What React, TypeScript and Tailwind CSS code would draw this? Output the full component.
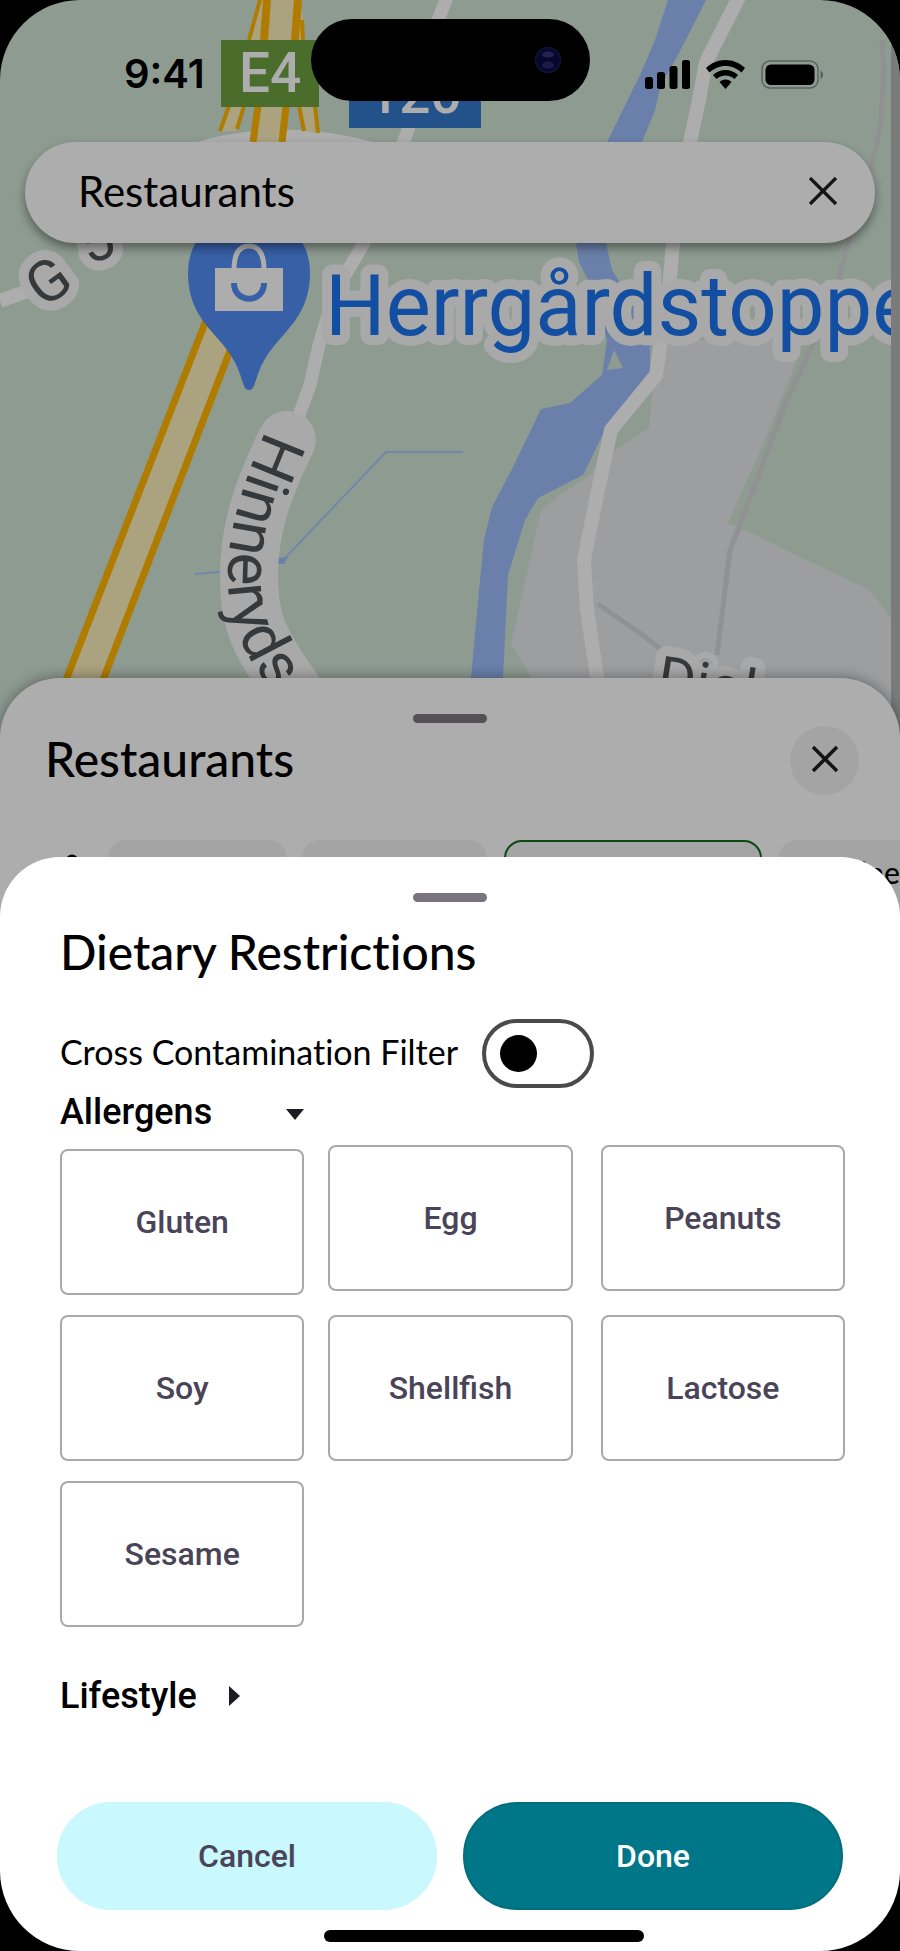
import { useState } from 'react';
import { X } from 'lucide-react';

const allergenColumns = [
  { items: ['Gluten', 'Soy', 'Sesame'], className: 'mt-1 gap-5' },
  { items: ['Egg', 'Shellfish'], className: 'ml-6 gap-6' },
  { items: ['Peanuts', 'Lactose'], className: 'ml-7 gap-6' },
];

function MapBackground() {
  return (
    <svg
      viewBox="0 0 900 860"
      preserveAspectRatio="xMidYMin slice"
      className="absolute inset-x-0 top-0 w-full"
      fontFamily="Roboto, sans-serif"
      aria-hidden="true"
    >
      <rect width="900" height="860" fill="#8d9b91" />

      {/* Built-up area */}
      <path
        d="M668 340H805L795 365L765 440L728 523L745 530L800 557L870 590L891 618V860H532V678L511 645L521 600L530 560L541 510L560 495L590 475L600 460L620 447L649 428L652 395Z"
        fill="#9d9ea0"
      />

      {/* River */}
      <path
        d="M668 0H706L678 55L661 85L655 110L642 142L606 200V243L612 270L650 330V375L605 430L583 475L538 498L525 520L508 575L503 678V700H470L471 678L480 580L484 540L492 507L513 467L541 409L570 403L602 375L607 340L588 280L579 262L576 243V200L607 142L640 75L655 40Z"
        fill="#6a80aa"
      />
      <path d="M614 350L623 368L607 370Z" fill="#8d9b91" />
      <path d="M195 574L230 571M275 561L285 558L386 452H463" fill="none" stroke="#7387a6" strokeWidth="2" />
      <path d="M270 559L288 557L284 564H272Z" fill="#6a80aa" />

      {/* Small roads */}
      <path
        d="M882 40L884 70L880 130L868 180L846 250L838 285L810 350L785 405L738 530L730 550L717 655"
        fill="none"
        stroke="#909193"
        strokeWidth="5"
      />
      <path d="M598 604L640 633L662 650" fill="none" stroke="#909193" strokeWidth="5" />
      <path
        d="M740 -5L706 62L699 100L690 142L673 243L668 300L661 340L656 375L611 430L598 490L584 560L587 610L599 690"
        fill="none"
        stroke="#adadad"
        strokeWidth="14"
      />
      <path
        d="M450 -10L430 40L408 130L364 243L335 292L319 345L310 385L290 440"
        fill="none"
        stroke="#adadad"
        strokeWidth="13"
      />
      <path d="M0 301L25 292L45 280" fill="none" stroke="#adadad" strokeWidth="14" />
      <path d="M190 144Q280 115 380 144Z" fill="#adadad" />

      {/* E4 motorway */}
      <path d="M262 0L250 40H304L301 0Z" fill="#aba27f" />
      <path d="M260 0L249 40M302 20L303 40" fill="none" stroke="#b07c00" strokeWidth="4" />
      <path d="M267 0L264 40M298 0L295 40" fill="none" stroke="#b07c00" strokeWidth="8" />
      <path d="M229 106L220 131H237L244 106ZM299 106L304 131L318 133L315 106ZM258 106L252 142H282L286 106Z" fill="#aba27f" />
      <path d="M229 106L220 131M244 106L237 129M299 106L304 131M315 106L318 133" fill="none" stroke="#b07c00" strokeWidth="4" />
      <path d="M258 106L253 142M286 106L282 142" fill="none" stroke="#b07c00" strokeWidth="7" />
      <path d="M210 310L66 680H104L238 330Z" fill="#aba27f" />
      <path d="M210 310L66 680M238 330L103 680" fill="none" stroke="#b07c00" strokeWidth="7" />

      {/* Road signs */}
      <rect x="221" y="40" width="98" height="67" fill="#4a6d2c" />
      <text x="239" y="92" fontSize="55" fontWeight="500" fill="#adadad">E4</text>
      <rect x="349" y="70" width="132" height="58" fill="#23528a" />
      <text x="368" y="113" fontSize="55" fontWeight="500" fill="#adadad">120</text>

      {/* Shop pin */}
      <path
        d="M249 390C245 390 244 386 242 380C236 360 228 350 212 332C197 315 188 298 188 272A61 61 0 0 1 310 272C310 298 301 315 286 332C270 350 262 360 256 380C254 386 253 390 249 390Z"
        fill="#3860a7"
      />
      <rect x="215" y="268" width="68" height="43" fill="#adadad" />
      <path d="M234 270C234 252 240 246 249 246S264 252 264 270" fill="none" stroke="#adadad" strokeWidth="5" />
      <path d="M234 283C234 304 264 304 264 283" fill="none" stroke="#3860a7" strokeWidth="6" />

      {/* Labels */}
      <g stroke="#a9a9a9" strokeWidth="20" strokeLinejoin="round" paintOrder="stroke">
        <text x="325" y="335" fontSize="85" fill="#124fa3">Herrgårdstoppe</text>
        <g fill="#36393b" fontSize="58">
          <text transform="translate(44 309) rotate(-36)">G</text>
          <text transform="translate(88 265) rotate(-20)">5</text>
          {/* White casing under the curved street name */}
          <path d="M287 440C262 490 249 530 249 575S256 640 300 700" fill="none" strokeWidth="58" strokeLinecap="round" />
          <path id="hinneryds" d="M266 430C243 482 228 530 228 575S238 650 290 715" fill="none" stroke="none" />
          <text fontSize="62" stroke="none">
            <textPath href="#hinneryds">Hinneryds</textPath>
          </text>
          <text transform="translate(655 696) rotate(9)">Diol</text>
        </g>
      </g>
      <rect x="891" width="9" height="860" fill="#7b7b7b" />
    </svg>
  );
}

function StatusBar() {
  return (
    <div className="grid grid-cols-[1fr_279px_1fr] items-center pt-[19px]">
      <span className="pt-7 pl-[124px] font-[Inter,sans-serif] text-[40px] leading-10 font-semibold">9:41</span>
      <div className="flex h-[82px] items-center justify-end rounded-full bg-black pr-7">
        <svg viewBox="0 0 28 28" className="size-7" aria-hidden="true">
          <circle cx="14" cy="14" r="12.5" fill="#08082c" stroke="#11113c" strokeWidth="1.5" />
          <ellipse cx="14" cy="8.500" rx="6" ry="3" fill="#22224e" />
          <ellipse cx="14" cy="19" rx="6" ry="3.500" fill="#1b1b48" />
        </svg>
      </div>
      <div className="flex items-center justify-end gap-4 pt-7 pr-[76px]">
        <svg viewBox="0 0 45 29" className="h-[29px] w-[45px]" aria-hidden="true">
          <rect x="0" y="17" width="8" height="12" rx="2.500" />
          <rect x="12" y="12" width="8" height="17" rx="2.500" />
          <rect x="24.500" y="6" width="8" height="23" rx="2.500" />
          <rect x="37" y="0" width="8" height="29" rx="2.500" />
        </svg>
        <svg viewBox="0 0 39 29" className="h-[29px] w-[39px]" aria-hidden="true">
          <path d="M19.500 0C27 0 34 3 39 8L35.500 12.500C31 8.500 25.500 6 19.500 6S8 8.500 3.500 12.500L0 8C5 3 12 0 19.500 0Z" />
          <path d="M19.500 10C24.500 10 29 12 32 15L28.500 19C26 17 23 15.500 19.500 15.500S13 17 10.500 19L7 15C10 12 14.500 10 19.500 10Z" />
          <path d="M19.500 19.500C22 19.500 24 20.500 25.500 22L19.500 29L13.500 22C15 20.500 17 19.500 19.500 19.500Z" />
        </svg>
        <svg viewBox="0 0 63 29" className="h-[29px] w-[63px]" aria-hidden="true">
          <rect x="1" y="1" width="56" height="27" rx="8" fill="none" stroke="#5a645e" strokeWidth="1.500" />
          <rect x="4.500" y="4.500" width="49" height="20.500" rx="5.500" />
          <path d="M59.500 10.500C63 12 63 17.500 59.500 19Z" fill="#5a645e" />
        </svg>
      </div>
    </div>
  );
}

function RestaurantsSheet() {
  return (
    <section className="h-[260px] overflow-hidden rounded-t-[60px] bg-[#adadad] pt-9 shadow-[0_0_14px_rgba(0,0,0,0.4)]">
      <div className="mx-auto h-[9px] w-[74px] rounded-full bg-[#545056]" />
      <div className="flex items-center justify-between pt-[3px] pr-[41px] pl-[45px]">
        <h2 className="pb-1 font-[Lato,sans-serif] text-[48px] leading-[60px] font-medium">Restaurants</h2>
        <button type="button" aria-label="Close restaurants" className="flex size-[69px] items-center justify-center rounded-full bg-[#a4a4a4] pb-1">
          <X className="size-[48px] text-[#141414]" strokeWidth={1.75} strokeLinecap="butt" />
        </button>
      </div>
      <div className="mt-[45px] flex h-16 items-center overflow-hidden pl-[54px]">
        <svg viewBox="0 0 36 36" className="size-9 shrink-0" aria-hidden="true">
          <path d="M0 7H12M24 7H36M0 28H8M20 28H36" stroke="black" strokeWidth="3" />
          <circle cx="18" cy="7" r="5" fill="none" stroke="black" strokeWidth="3" />
          <circle cx="14" cy="28" r="5" fill="none" stroke="black" strokeWidth="3" />
        </svg>
        <div className="ml-[18px] h-full w-[179px] shrink-0 rounded-[18px] bg-[#a4a4a4]" />
        <div className="ml-[15px] h-full w-[185px] shrink-0 rounded-[18px] bg-[#a4a4a4]" />
        <div className="ml-[17px] h-full w-[258px] shrink-0 rounded-[18px] border-2 border-[#0a4a12] bg-[#a4a4a4]" />
        <div className="ml-[17px] flex h-full w-[185px] shrink-0 items-center rounded-[18px] bg-[#a4a4a4] pl-6 font-[Lato,sans-serif] text-[30px] leading-8 font-medium">
          Cuisine
        </div>
      </div>
    </section>
  );
}

function DietarySheet() {
  const [crossContamination, setCrossContamination] = useState(false);
  const [selected, setSelected] = useState<string[]>([]);

  const toggleAllergen = (name: string) => {
    setSelected((prev) => (prev.includes(name) ? prev.filter((item) => item !== name) : [...prev, name]));
  };

  return (
    <section className="relative -mt-[81px] rounded-t-[60px] bg-white pt-9 pb-[9px]">
      <div className="mx-auto h-[9px] w-[74px] rounded-full bg-[#79747e]" />

      <div className="pr-[55px] pl-[60px]">
        <h1 className="mt-5 pb-1 font-[Lato,sans-serif] text-[48px] leading-[60px] font-medium [font-variant-ligatures:none]">
          Dietary Restrictions
        </h1>

        <div className="mt-[33px] flex items-center gap-6">
          <label
            htmlFor="cross-contamination"
            className="pb-1 font-[Lato,sans-serif] text-[34px] leading-10 [font-variant-ligatures:none]"
          >
            Cross Contamination Filter
          </label>
          <input
            id="cross-contamination"
            type="checkbox"
            role="switch"
            checked={crossContamination}
            onChange={(e) => setCrossContamination(e.target.checked)}
            className="flex h-[69px] w-[112px] cursor-pointer appearance-none items-center rounded-full border-4 border-[#4a4a4a] bg-white px-[14px] before:size-[37px] before:rounded-full before:bg-black checked:justify-end"
          />
        </div>

        <button type="button" aria-expanded="true" className="mt-1 flex w-[244px] items-center justify-between text-[36px] leading-10 font-medium">
          Allergens
          <svg viewBox="0 0 18 11" className="mt-1 h-[11px] w-[18px]" aria-hidden="true">
            <path d="M0 0H18L9 11Z" fill="#1d1b20" />
          </svg>
        </button>

        <div className="mt-[13px] flex items-start">
          {allergenColumns.map((column) => (
            <div key={column.items[0]} className={`flex flex-1 flex-col ${column.className}`}>
              {column.items.map((name) => (
                <button
                  key={name}
                  type="button"
                  aria-pressed={selected.includes(name)}
                  onClick={() => toggleAllergen(name)}
                  className={`h-[146px] rounded-lg border-2 border-[#a9a9a9] text-[32px] leading-10 font-medium text-[#4a4458] ${
                    selected.includes(name) ? 'bg-[#c9f8fe]' : 'bg-white'
                  }`}
                >
                  {name}
                </button>
              ))}
            </div>
          ))}
        </div>

        <button type="button" aria-expanded="false" className="mt-[49px] flex items-center gap-8 text-[36px] leading-10 font-medium">
          Lifestyle
          <svg viewBox="0 0 11 20" className="h-5 w-[11px]" aria-hidden="true">
            <path d="M0 0L11 10L0 20Z" fill="#1d1b20" />
          </svg>
        </button>
      </div>

      <div className="mt-[86px] flex gap-[26px] px-[57px] text-[32px] leading-10 font-medium">
        <button type="button" className="h-[108px] flex-1 rounded-full border-2 border-[#c9f8fe] bg-[#c9f8fe] text-[#4a4458]">
          Cancel
        </button>
        <button type="button" className="h-[108px] flex-1 rounded-full border-2 border-[#046d7c] bg-[#007788] text-white">
          Done
        </button>
      </div>

      <div className="mt-5 ml-[36%] h-3 w-80 rounded-full bg-black" />
    </section>
  );
}

export default function App() {
  return (
    <div className="bg-black font-[Roboto,sans-serif] text-black">
      <main className="relative overflow-hidden rounded-[80px]">
        <MapBackground />
        <div className="relative">
          <StatusBar />
          <div className="mx-[25px] mt-[41px] flex h-[101px] items-center justify-between rounded-full bg-[#adadad] pr-[26px] pl-[53px] shadow-[0_5px_10px_rgba(0,0,0,0.4)]">
            <input
              type="text"
              aria-label="Search places"
              defaultValue="Restaurants"
              className="min-w-0 flex-1 bg-transparent pb-1 font-[Lato,sans-serif] text-[42px] leading-[50px] outline-none"
            />
            <button type="button" aria-label="Clear search" className="pb-1">
              <X className="size-[52px] text-[#141414]" strokeWidth={1.5} strokeLinecap="butt" />
            </button>
          </div>
          <div className="mt-[435px]">
            <RestaurantsSheet />
            <DietarySheet />
          </div>
        </div>
      </main>
    </div>
  );
}
